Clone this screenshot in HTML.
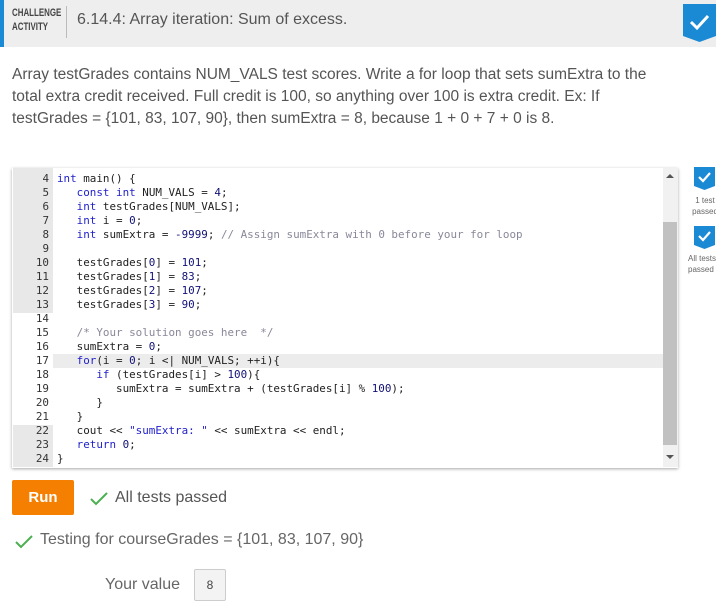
<!DOCTYPE html>
<html><head><meta charset="utf-8"><style>
*{margin:0;padding:0;box-sizing:border-box}
body{width:716px;height:606px;background:#fff;position:relative;overflow:hidden;font-family:"Liberation Sans",sans-serif;color:#555}
.a{position:absolute;white-space:nowrap}
.code{font-family:"DejaVu Sans Mono","Liberation Mono",monospace;font-size:10.9px;line-height:14px;color:#222;white-space:pre}
.k{color:#22c}.n{color:#117}.c{color:#889}.s{color:#22c}
.ln{position:absolute;left:13px;width:40px;text-align:right;padding-right:4px;font-family:"DejaVu Sans Mono",monospace;font-size:10.9px;line-height:14px;color:#333}
</style></head><body>
<div class="a" style="left:0;top:0;width:716px;height:47px;background:#eeeeee"></div>
<div class="a" style="left:0;top:0;width:4px;height:47px;background:#1a8ad4"></div>
<div class="a" style="left:12px;top:6px;font-size:11px;font-weight:bold;color:#444;line-height:14px;transform:scaleX(0.72);transform-origin:0 0">CHALLENGE<br>ACTIVITY</div>
<div class="a" style="left:66px;top:6px;width:1px;height:32px;background:#bbb"></div>
<div class="a" style="left:77px;top:11px;font-size:16px;color:#555">6.14.4: Array iteration: Sum of excess.</div>
<svg class="a" style="left:683px;top:4px" width="33" height="38" viewBox="0 0 33 38"><path d="M0 0H33V32L16.5 38L0 32Z" fill="#1a8ad4"/><path d="M8 18L14 24L25 12" stroke="#fff" stroke-width="3" fill="none"/></svg>
<div class="a" style="left:12px;top:64px;font-size:15.5px;line-height:22px;color:#555;white-space:normal;width:648px">Array testGrades contains NUM_VALS test scores. Write a for loop that sets sumExtra to the total extra credit received. Full credit is 100, so anything over 100 is extra credit. Ex: If testGrades = {101, 83, 107, 90}, then sumExtra = 8, because 1 + 0 + 7 + 0 is 8.</div>

<div class="a" style="left:12px;top:168px;width:666px;height:300px;background:#fff;box-shadow:0 1px 3px rgba(0,0,0,.35)"></div>
<div class="a" style="left:13px;top:168px;width:40px;height:145px;background:#e8e8e8"></div>
<div class="a" style="left:13px;top:425px;width:40px;height:42px;background:#e8e8e8"></div>
<div class="a" style="left:53px;top:354px;width:610px;height:14px;background:#ececec"></div>
<div class="a" style="left:663px;top:168px;width:15px;height:299px;background:#f1f1f1"></div>
<div class="a" style="left:663px;top:222px;width:14px;height:223px;background:#c1c1c1"></div>
<div class="a" style="left:666px;top:174px;width:0;height:0;border:4px solid transparent;border-bottom:4px solid #555;border-top:0"></div>
<div class="a" style="left:666px;top:455px;width:0;height:0;border:4px solid transparent;border-top:4px solid #555;border-bottom:0"></div>

<div class="ln" style="top:172px">4<br>5<br>6<br>7<br>8<br>9<br>10<br>11<br>12<br>13<br>14<br>15<br>16<br>17<br>18<br>19<br>20<br>21<br>22<br>23<br>24</div>
<div class="a code" style="left:57px;top:172px"><span class="k">int</span> main() {
   <span class="k">const</span> <span class="k">int</span> NUM_VALS = <span class="n">4</span>;
   <span class="k">int</span> testGrades[NUM_VALS];
   <span class="k">int</span> i = <span class="n">0</span>;
   <span class="k">int</span> sumExtra = <span class="n">-9999</span>; <span class="c">// Assign sumExtra with 0 before your for loop</span>

   testGrades[<span class="n">0</span>] = <span class="n">101</span>;
   testGrades[<span class="n">1</span>] = <span class="n">83</span>;
   testGrades[<span class="n">2</span>] = <span class="n">107</span>;
   testGrades[<span class="n">3</span>] = <span class="n">90</span>;

   <span class="c">/* Your solution goes here  */</span>
   sumExtra = <span class="n">0</span>;
   <span class="k">for</span>(i = <span class="n">0</span>; i &lt;| NUM_VALS; ++i){
      <span class="k">if</span> (testGrades[i] &gt; <span class="n">100</span>){
         sumExtra = sumExtra + (testGrades[i] % <span class="n">100</span>);
      }
   }
   cout &lt;&lt; <span class="s">"sumExtra: "</span> &lt;&lt; sumExtra &lt;&lt; endl;
   <span class="k">return</span> <span class="n">0</span>;
}</div>

<svg class="a" style="left:694px;top:167px" width="21" height="23" viewBox="0 0 21 23"><path d="M0 0H21V19L10.5 23L0 19Z" fill="#1a8ad4"/><path d="M5 10L9 14L16 6" stroke="#fff" stroke-width="2.2" fill="none"/></svg>
<div class="a" style="left:690px;top:195px;font-size:8px;line-height:11px;color:#666;text-align:center;width:30px">1 test<br>passed</div>
<svg class="a" style="left:694px;top:226px" width="21" height="23" viewBox="0 0 21 23"><path d="M0 0H21V19L10.5 23L0 19Z" fill="#1a8ad4"/><path d="M5 10L9 14L16 6" stroke="#fff" stroke-width="2.2" fill="none"/></svg>
<div class="a" style="left:688px;top:253px;font-size:8px;line-height:11px;color:#666;width:30px">All tests<br>passed</div>

<div class="a" style="left:12px;top:480px;width:62px;height:35px;background:#f47f00;border-radius:2px;color:#fff;font-weight:bold;font-size:15px;text-align:center;line-height:35px">Run</div>
<svg class="a" style="left:89px;top:491px" width="20" height="16"><path d="M2 8L7 13L18 2" stroke="#4caf50" stroke-width="2" fill="none"/></svg>
<div class="a" style="left:115px;top:489px;font-size:16px;color:#555">All tests passed</div>
<svg class="a" style="left:14px;top:534px" width="20" height="16"><path d="M2 8L7 13L18 2" stroke="#4caf50" stroke-width="2" fill="none"/></svg>
<div class="a" style="left:40px;top:531px;font-size:16px;color:#666">Testing for courseGrades = {101, 83, 107, 90}</div>
<div class="a" style="left:105px;top:576px;font-size:16px;color:#666">Your value</div>
<div class="a" style="left:194px;top:569px;width:32px;height:32px;background:#f3f3f3;border:1px solid #ccc;border-radius:2px;font-size:12px;text-align:center;line-height:30px;color:#444">8</div>
</body></html>
